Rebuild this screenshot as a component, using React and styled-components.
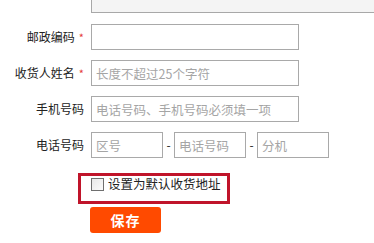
import React from 'react'
import styled, { createGlobalStyle } from 'styled-components'

const Global = createGlobalStyle`
  html, body {
    margin: 0;
    padding: 0;
    background: #fff;
    overflow: hidden;
  }
  body {
    font-family: "Noto Sans CJK SC", "Liberation Sans", sans-serif;
    font-size: 12px;
    color: #222;
  }
`

const Form = styled.div`
  width: 374px;
  height: 243px;
  overflow: hidden;
`

const AddressBox = styled.div`
  margin: -60px 0 0 91px;
  width: 300px;
  height: 71px;
  border: 1px solid #a8a8a8;
  background: #f4f4f4;
`

const Row = styled.div`
  display: flex;
  align-items: center;
  height: 26px;
  margin-top: ${p => p.$top || 10}px;
`

const Label = styled.div`
  width: 91px;
  padding-right: 7px;
  text-align: right;
  line-height: 26px;
  white-space: nowrap;
  box-sizing: border-box;
`

const Star = styled.span`
  color: #e4393c;
  margin-left: 4px;
  font-size: 11px;
`

const Input = styled.input`
  box-sizing: border-box;
  width: ${p => p.$w || 208}px;
  height: 26px;
  border: 1px solid #a9a9a9;
  padding: 0 4px;
  font-family: inherit;
  font-size: 12.5px;
  color: #333;
  outline: none;
  &::placeholder {
    color: #a5a5a5;
  }
`

const Dash = styled.span`
  width: 11px;
  text-align: center;
  line-height: 26px;
`

const Highlight = styled.label`
  display: flex;
  align-items: flex-start;
  gap: 4px;
  box-sizing: border-box;
  width: 152px;
  height: 31px;
  margin: 15px 0 0 78px;
  padding: 1px 0 0 10px;
  border: 3px solid #c0142a;
  font-size: 12.5px;
  line-height: 13px;
  white-space: nowrap;
`

const Check = styled.span`
  box-sizing: border-box;
  width: 13px;
  height: 13px;
  margin-top: 1px;
  border: 1px solid #6f6f6f;
  background: linear-gradient(135deg, #e8e8e8, #fbfbfb);
  flex-shrink: 0;
`

const SaveButton = styled.button`
  display: block;
  box-sizing: border-box;
  margin: 3px 0 0 90px;
  width: 71px;
  height: 26px;
  border: none;
  border-radius: 3px;
  background: #ff4a00;
  color: #fff;
  font-family: inherit;
  font-size: 14px;
  font-weight: bold;
  letter-spacing: 1px;
  cursor: pointer;
`

export default function App() {
  return (
    <Form>
      <Global />
      <AddressBox />
      <Row $top={11}>
        <Label>邮政编码<Star>*</Star></Label>
        <Input />
      </Row>
      <Row>
        <Label>收货人姓名<Star>*</Star></Label>
        <Input placeholder="长度不超过25个字符" />
      </Row>
      <Row>
        <Label>手机号码</Label>
        <Input placeholder="电话号码、手机号码必须填一项" />
      </Row>
      <Row>
        <Label>电话号码</Label>
        <Input $w={72} placeholder="区号" />
        <Dash>-</Dash>
        <Input $w={72} placeholder="电话号码" />
        <Dash>-</Dash>
        <Input $w={72} placeholder="分机" />
      </Row>
      <Highlight>
        <Check />
        设置为默认收货地址
      </Highlight>
      <SaveButton>保存</SaveButton>
    </Form>
  )
}
